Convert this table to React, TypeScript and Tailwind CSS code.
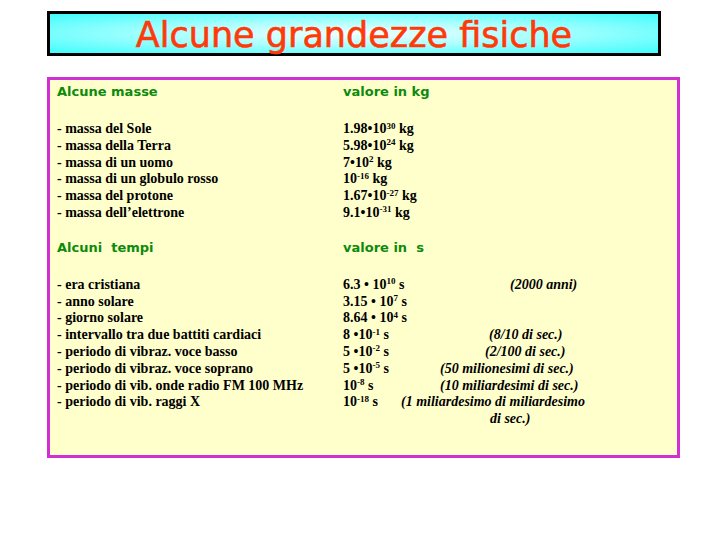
// Slide: "Alcune grandezze fisiche" – table of masses and times

const masse = [
  { label: "- massa del Sole", base: "1.98•10", exp: "30", unit: " kg" },
  { label: "- massa della Terra", base: "5.98•10", exp: "24", unit: " kg" },
  { label: "- massa di un uomo", base: "7•10", exp: "2", unit: " kg" },
  { label: "- massa di un globulo rosso", base: "10", exp: "-16", unit: " kg" },
  { label: "- massa del protone", base: "1.67•10", exp: "-27", unit: " kg" },
  { label: "- massa dell’elettrone", base: "9.1•10", exp: "-31", unit: " kg" },
];

const tempi = [
  { label: "- era cristiana", base: "6.3 • 10", exp: "10", unit: " s", note: "(2000 anni)", ml: "ml-[109px]" },
  { label: "- anno solare", base: "3.15 • 10", exp: "7", unit: " s", note: "", ml: "" },
  { label: "- giorno solare", base: "8.64 • 10", exp: "4", unit: " s", note: "", ml: "" },
  { label: "- intervallo tra due battiti cardiaci", base: "8 •10", exp: "-1", unit: " s", note: "(8/10 di sec.)", ml: "ml-[88px]" },
  { label: "- periodo di vibraz. voce basso", base: "5 •10", exp: "-2", unit: " s", note: "(2/100 di sec.)", ml: "ml-[84px]" },
  { label: "- periodo di vibraz. voce soprano", base: "5 •10", exp: "-5", unit: " s", note: "(50 milionesimi di sec.)", ml: "ml-[39px]" },
  { label: "- periodo di vib. onde radio FM 100 MHz", base: "10", exp: "-8", unit: " s", note: "(10 miliardesimi di sec.)", ml: "ml-[39px]" },
  { label: "- periodo di vib. raggi X", base: "10", exp: "-18", unit: " s", note: "(1 miliardesimo di miliardesimo", ml: "ml-0" },
  { label: "", base: "", exp: "", unit: "", note: "di sec.)", ml: "ml-[89px]" },
];

const heading = "font-['DejaVu_Sans',sans-serif] font-bold text-[13px] text-[#0c8a0c] leading-[17px] whitespace-pre";
const body = "font-['Liberation_Serif',serif] font-bold text-[14px] text-black leading-[16.8px] whitespace-nowrap";

function Value({ base, exp, unit }: { base: string; exp: string; unit: string }) {
  if (!base) return <span>&nbsp;</span>;
  return (
    <span>
      {base}
      <sup className="text-[9px] leading-none">{exp}</sup>
      {unit}
    </span>
  );
}

export default function App() {
  return (
    <div className="w-[720px] h-[540px] bg-white pt-[11px] pl-[47px]">
      {/* title bar */}
      <div className="w-[614px] h-[45px] border-[3px] border-black bg-[radial-gradient(ellipse_at_center,#f2ffff_0%,#a8ffff_45%,#3ffcfc_100%)] flex items-center justify-center">
        <span className="font-['DejaVu_Sans',sans-serif] text-[35px] leading-none text-[#ff3a0a] mt-[3px] [-webkit-text-stroke:0.6px_#ff3a0a]">
          Alcune grandezze fisiche
        </span>
      </div>

      {/* table */}
      <div className="mt-[21px] w-[633px] h-[381px] border-[3px] border-[#d22fd2] bg-[#ffffcc] pt-[3px] pl-[7px]">
        <div className="grid grid-cols-[286px_1fr]">
          <div className={heading}>Alcune masse</div>
          <div className={heading}>valore in kg</div>
        </div>

        <div className="grid grid-cols-[286px_1fr] mt-[21px]">
          <div className={body}>
            {masse.map((m) => (
              <div key={m.label}>{m.label}</div>
            ))}
          </div>
          <div className={body}>
            {masse.map((m) => (
              <div key={m.label}>
                <Value base={m.base} exp={m.exp} unit={m.unit} />
              </div>
            ))}
          </div>
        </div>

        <div className="grid grid-cols-[286px_1fr] mt-[17px]">
          <div className={heading}>Alcuni  tempi</div>
          <div className={heading}>valore in  s</div>
        </div>

        <div className="grid grid-cols-[286px_1fr] mt-[21px]">
          <div className={body}>
            {tempi.map((t, i) => (
              <div key={i}>{t.label || "\u00a0"}</div>
            ))}
          </div>
          <div className={body}>
            {tempi.map((t, i) => (
              <div key={i} className="flex">
                <span className="w-[58px] shrink-0">
                  <Value base={t.base} exp={t.exp} unit={t.unit} />
                </span>
                {t.note && <span className={`italic ${t.ml}`}>{t.note}</span>}
              </div>
            ))}
          </div>
        </div>
      </div>
    </div>
  );
}
